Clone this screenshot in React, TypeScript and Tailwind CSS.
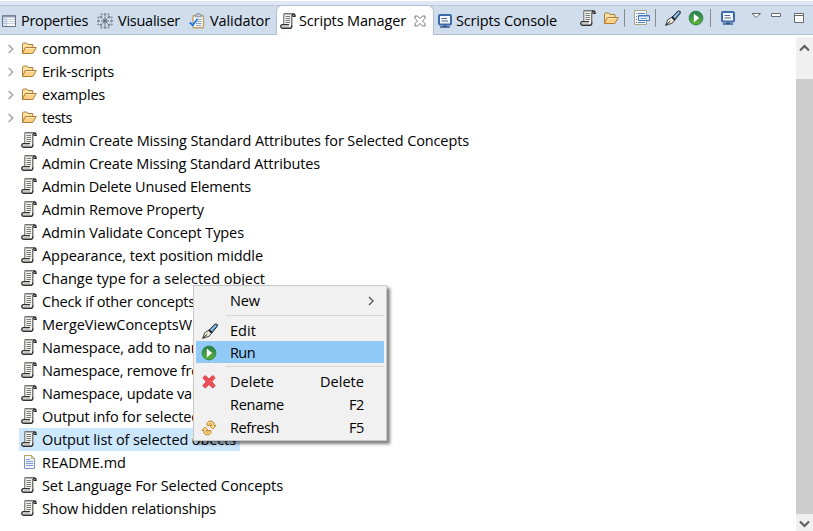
import { useLayoutEffect, useRef, useState } from "react";

/* Text whose letter spacing is tuned so that it fills the given width. */
function Label({ text, width, className = "" }: { text: string; width: number; className?: string }) {
  const ref = useRef<HTMLSpanElement>(null);
  const [spacing, setSpacing] = useState(0);
  useLayoutEffect(() => {
    if (ref.current) {
      const natural = ref.current.getBoundingClientRect().width - spacing * text.length;
      setSpacing((width - natural) / text.length);
    }
  }, [text, width]);
  return (
    <span ref={ref} className={`shrink-0 whitespace-pre ${className}`} style={{ letterSpacing: spacing }}>
      {text}
    </span>
  );
}

function ScriptIcon() {
  return (
    <svg width="16" height="16" viewBox="0 0 16 16" className="shrink-0">
      <path d="M3.5 11.5V2L5 .5H13.5L12.5 3V13L11 15.5H2L.8 13.5L1.5 11.5Z" fill="#f3f3f0" />
      <path d="M3.7 11V1.5" fill="none" stroke="#8b8b8b" strokeWidth="1.4" />
      <path d="M3.5 .8H13.5" stroke="#555" strokeWidth="1.2" />
      <path d="M12.5 3.6V2Q12.6 .8 13.7 .8Q15.2 .9 15.1 3.4H13" fill="#ddd" stroke="#222" strokeWidth="1.2" />
      <path d="M11.7 2V12.5" stroke="#777" strokeWidth="1.5" />
      <path d="M9 11.6H2Q.7 12 .7 13.4Q.9 15.2 2.4 15.2H10.5Q11.9 15 11.9 12.3" fill="none" stroke="#303030" strokeWidth="1.4" />
      <path d="M2 13.4H9" stroke="#c0c0c0" />
      <path d="M5.5 3.5H10M5.5 5.5H10M5.5 7.5H10M5.5 9.5H10" stroke="#777" strokeWidth="1" />
    </svg>
  );
}

function FolderIcon() {
  return (
    <svg width="16" height="16" viewBox="0 0 16 16" className="shrink-0">
      <path d="M1.5 13V4L2.5 3H5.8L7 4.5H11.8V7" fill="#fbe3a5" stroke="#b17a35" />
      <path d="M1.3 13.5L4.3 7.5H15.3L11.8 13.5Z" fill="#fbd285" stroke="#b17a35" strokeLinejoin="round" />
      <path d="M4.9 8.5H13.6" stroke="#ffeab8" />
    </svg>
  );
}

function FileIcon() {
  return (
    <svg width="16" height="16" viewBox="0 0 16 16" className="shrink-0">
      <path d="M3.5 1.5H10.5L13.5 4.5V14.5H3.5Z" fill="#eef5fd" stroke="#8390b0" />
      <path d="M3.5 5V1.5H10.5L13.5 4.5" fill="none" stroke="#b5a268" />
      <path d="M10.5 1.5V4.5H13.5Z" fill="#e2cf91" stroke="#b5a268" strokeWidth=".7" />
      <path d="M5 5.5H9M5 7.5H12M5 9.5H12M5 11.5H12" stroke="#7f9ccc" />
    </svg>
  );
}

function MonitorIcon() {
  return (
    <svg width="16" height="16" viewBox="0 0 16 16" className="shrink-0">
      <rect x="2" y="2" width="12" height="9.5" rx="1" fill="#f4f8fd" stroke="#3d6aa8" strokeWidth="2" />
      <path d="M4.5 5.5H10M4.5 8H11" stroke="#526789" />
      <path d="M6 12.5H10V13.2H13V14.7H3V13.2H6Z" fill="#315487" />
    </svg>
  );
}

function RunIcon() {
  return (
    <svg width="16" height="16" viewBox="0 0 16 16" className="shrink-0">
      <defs>
        <linearGradient id="run" x2="0" y2="1">
          <stop stopColor="#23804f" />
          <stop offset="1" stopColor="#5fb336" />
        </linearGradient>
      </defs>
      <circle cx="8" cy="8" r="6.9" fill="url(#run)" stroke="#2b8448" strokeWidth=".9" />
      <path d="M5.8 3.5L11.2 8L5.8 12.5Z" fill="#fff" />
    </svg>
  );
}

function PenIcon() {
  return (
    <svg width="16" height="16" viewBox="0 0 16 16" className="shrink-0">
      <path d="M7.3 7L13 .9L15.3 1.5V3.2L10.2 9.6Z" fill="#5685ad" stroke="#172536" strokeWidth=".9" />
      <path d="M9 7.5L14 2.2" stroke="#a5d3ee" strokeWidth="1.1" />
      <path d="M.7 15.3L2.7 9.7L6.8 7.4L9.5 9.9L7.3 13.2Z" fill="#f3efe2" stroke="#333" strokeWidth=".9" />
      <path d="M.7 15.3L5.3 11.2" stroke="#222" strokeWidth="1" />
      <path d="M6.7 7L10.1 10" stroke="#111" strokeWidth="1.4" />
    </svg>
  );
}

function TableIcon() {
  return (
    <svg width="16" height="16" viewBox="0 0 16 16" className="shrink-0">
      <path d="M1.5 2.5H14.5V13.5H1.5Z" fill="#fff" stroke="#65718c" />
      <path d="M2 3.5H14" stroke="#8c9ab4" strokeWidth="2" />
      <path d="M2 5H5V13H2Z" fill="#d8e4f2" />
      <path d="M5.5 5V13M2 6.5H14M2 8.5H14M2 10.5H14" stroke="#b7c3d4" strokeWidth=".8" />
    </svg>
  );
}

function NetworkIcon() {
  return (
    <svg width="16" height="16" viewBox="0 0 16 16" className="shrink-0" fill="#eef3f8" stroke="#4a535d">
      <path d="M8 3.5V12.5M4 8H12M5.5 5.5L10.5 10.5M10.5 5.5L5.5 10.5" strokeWidth=".8" />
      {[[8, 1.5], [8, 14.5], [1.5, 8], [14.5, 8], [4, 4], [12, 4], [4, 12], [12, 12]].map(([x, y]) => (
        <circle key={`${x}-${y}`} cx={x} cy={y} r=".9" strokeWidth=".8" />
      ))}
      {[[4.5, 1.3], [11.5, 1.3], [4.5, 14.7], [11.5, 14.7], [1.3, 4.5], [14.7, 4.5], [1.3, 11.5], [14.7, 11.5]].map(([x, y]) => (
        <circle key={`${x}-${y}`} cx={x} cy={y} r=".6" strokeWidth=".6" />
      ))}
      <circle cx="8" cy="8" r="1" />
    </svg>
  );
}

function ValidatorIcon() {
  return (
    <svg width="16" height="16" viewBox="0 0 16 16" className="shrink-0">
      <rect x="4" y="2.5" width="10.5" height="12.3" rx="1" fill="#f2f6fa" stroke="#c0a267" strokeWidth="1.4" />
      <path d="M6.5 3.8V2H8V.7H11V2H12.4V3.8Z" fill="#c7cfd9" stroke="#78889d" strokeWidth=".8" />
      <path d="M8.5 6.5H12.5M8.5 8.5H12.5M7 10.5H12.5M7 12.5H12.5" stroke="#8fa4bd" />
      <path d="M.8 9.5L3.7 12.2L8.5 6" fill="none" stroke="#1774ed" strokeWidth="1.8" />
    </svg>
  );
}

function LinkEditorIcon() {
  return (
    <svg width="16" height="16" viewBox="0 0 16 16" className="shrink-0">
      <path d="M.5 .5H12.5V14.5H.5Z" fill="#f4f8fc" stroke="#a6a88e" />
      <path d="M2 3.5H3M4 3.5H11M2 6.5H3M2 9.5H3M2 12.5H3M4 12.5H11" stroke="#5783bd" />
      <path d="M4.5 5.5H15.5V10.5H4.5Z" fill="#e9f3ff" stroke="#4275b8" />
      <path d="M5 6H15" stroke="#4275b8" />
      <path d="M6.5 8.5H13" stroke="#7299c7" />
    </svg>
  );
}

function DeleteIcon() {
  return (
    <svg width="16" height="16" viewBox="0 0 16 16" className="shrink-0">
      <path d="M4.3 1.5L8 5L11.7 1.5L14.2 3.8L10.8 7.7L14.2 11.7L11.7 14L8 10.5L4.3 14L1.8 11.7L5.2 7.7L1.8 3.8Z" fill="#ee5057" stroke="#cf3c43" strokeWidth=".9" strokeLinejoin="round" />
    </svg>
  );
}

function RefreshIcon() {
  return (
    <svg width="16" height="16" viewBox="0 0 16 16" className="shrink-0" fill="#ffdc83" stroke="#b97c24" strokeWidth=".9" strokeLinejoin="round">
      <path d="M6 5.6V3.2L8 1.2H11L13 3V5.5H15L11.8 9L8.6 5.5H10.5V4L9.2 3.6L8 4.6V5.6Z" />
      <path d="M10 10.4V12.8L8 14.8H5L3 13V10.5H1L4.2 7L7.4 10.5H5.5V12L6.8 12.4L8 11.4V10.4Z" />
    </svg>
  );
}

function Chevron() {
  return (
    <svg width="6" height="10" viewBox="0 0 6 10" className="shrink-0" fill="none" stroke="#a6a6a6" strokeWidth="1.6">
      <path d="M.7 1L4.7 5L.7 9" />
    </svg>
  );
}

const folders: [string, number][] = [
  ["common", 59],
  ["Erik-scripts", 72],
  ["examples", 63],
  ["tests", 30],
];

const files: [string, number][] = [
  ["Admin Create Missing Standard Attributes for Selected Concepts", 427],
  ["Admin Create Missing Standard Attributes", 278],
  ["Admin Delete Unused Elements", 209],
  ["Admin Remove Property", 162],
  ["Admin Validate Concept Types", 202],
  ["Appearance, text position middle", 221],
  ["Change type for a selected object", 223],
  ["Check if other concepts", 153],
  ["MergeViewConceptsW", 150],
  ["Namespace, add to name", 170],
  ["Namespace, remove from", 171],
  ["Namespace, update value", 170],
  ["Output info for selected", 158],
  ["Output list of selected obects", 194],
  ["README.md", 84],
  ["Set Language For Selected Concepts", 241],
  ["Show hidden relationships", 174],
];

const separator = "h-[18px] w-px shrink-0 bg-[#858a91]";

function TabBar() {
  return (
    <header className="flex h-[35px] shrink-0 flex-col bg-white pt-px">
      <div className="h-1 shrink-0 bg-[#dfe6f5]" />
      <div className="flex h-[30px] border-t border-[#c3c5cd] bg-[#cfddec]">
        <div className="flex w-[276px] items-center border-b border-[#b3bdd4] pl-px pt-px">
          <TableIcon />
          <Label text="Properties" width={67} className="ml-1" />
          <span className="ml-[9px] flex"><NetworkIcon /></span>
          <Label text="Visualiser" width={62} className="ml-[5px]" />
          <span className="ml-[9px] flex"><ValidatorIcon /></span>
          <Label text="Validator" width={60} className="ml-[5px]" />
        </div>
        <div className="-mt-px flex h-[30px] w-[158px] shrink-0 items-center rounded-t-[6px] border border-b-0 border-[#b3bdd4] bg-white pl-[3px] pt-px">
          <ScriptIcon />
          <Label text="Scripts Manager" width={107} className="ml-[3px]" />
          <svg width="12" height="12" viewBox="0 0 12 12" className="ml-[8px] shrink-0" fill="#fff" stroke="#777">
            <path d="M1 1H3.5L6 3.5L8.5 1H11V3.5L8.5 6L11 8.5V11H8.5L6 8.5L3.5 11H1V8.5L3.5 6L1 3.5Z" />
          </svg>
        </div>
        <div className="flex flex-1 items-center border-b border-[#b3bdd4] pl-[3px] pt-px">
          <MonitorIcon />
          <Label text="Scripts Console" width={101} className="ml-[3px]" />
          <div className="-mt-[5px] ml-[23px] flex flex-1 items-center">
            <ScriptIcon />
            <span className="ml-[7px] flex"><FolderIcon /></span>
            <span className={`ml-[5px] ${separator}`} />
            <span className="ml-[9px] flex"><LinkEditorIcon /></span>
            <span className={`ml-[5px] ${separator}`} />
            <span className="ml-[9px] flex"><PenIcon /></span>
            <span className="ml-[7px] flex"><RunIcon /></span>
            <span className={`ml-[6px] ${separator}`} />
            <span className="ml-[9px] flex"><MonitorIcon /></span>
            <svg width="56" height="14" viewBox="0 0 56 14" className="ml-[15px] shrink-0" fill="#fff" stroke="#6a6a6a">
              <path d="M1 2.5H9.5L5.2 6.5Z" />
              <path d="M20.5 2.5H29.5V5.5H20.5Z" />
              <path d="M43.5 2.5H52.5V11.5H43.5ZM43.5 4.5H52.5" />
            </svg>
          </div>
        </div>
      </div>
    </header>
  );
}

const row = "flex h-[23px] items-center";

function ContextMenu() {
  return (
    <div className="absolute left-[193px] top-[285px] flex h-[156px] w-[194px] flex-col border border-[#c8c8c8] bg-[#f1f1f1] px-[2px] pt-1 shadow-[3px_3px_3px_rgba(0,0,0,0.5)]">
      <div className="flex h-[22px] items-center pl-[34px] pr-[10px]">
        <Label text="New" width={30} />
        <svg width="6" height="10" viewBox="0 0 6 10" className="ml-auto" fill="none" stroke="#555" strokeWidth="1.3"><path d="M1 1L5 5L1 9" /></svg>
      </div>
      <div className="ml-[30px] mt-[3px] h-px bg-[#d7d7d7]" />
      <div className="mt-1 flex h-[21px] items-center pl-[6px]">
        <PenIcon />
        <Label text="Edit" width={26} className="ml-3" />
      </div>
      <div className="flex h-[22px] items-center bg-[#91c9f7] pl-[5px] pt-px">
        <RunIcon />
        <Label text="Run" width={25} className="ml-[13px]" />
      </div>
      <div className="ml-[30px] mt-[3px] h-px shrink-0 bg-[#d7d7d7]" />
      <div className={`${row} mt-[3px] pl-[5px] pr-5`}>
        <DeleteIcon />
        <Label text="Delete" width={44} className="ml-[13px]" />
        <span className="flex-1" />
        <Label text="Delete" width={44} />
      </div>
      <div className={`${row} pl-[34px] pr-5`}>
        <Label text="Rename" width={54} />
        <span className="flex-1" />
        <Label text="F2" width={15} />
      </div>
      <div className={`${row} pl-[5px] pr-5`}>
        <RefreshIcon />
        <Label text="Refresh" width={49} className="ml-[13px]" />
        <span className="flex-1" />
        <Label text="F5" width={15} />
      </div>
    </div>
  );
}

export default function App() {
  return (
    <div className="relative flex h-[531px] w-[813px] flex-col overflow-hidden bg-white font-['Open_Sans','Noto_Sans',sans-serif] text-[14.5px] leading-5 text-black">
      <TabBar />
      <main className="flex min-h-0 flex-1 pt-[2px]">
        <div className="flex-1">
          {folders.map(([name, width]) => (
            <div key={name} className={`${row} pl-[8px]`}>
              <Chevron />
              <span className="-mt-px ml-[7px] flex"><FolderIcon /></span>
              <Label text={name} width={width} className="ml-[5px]" />
            </div>
          ))}
          {files.map(([name, width], i) => (
            <div key={name} className={`${row} ml-[19px] w-fit pl-[2px] pr-1 ${i === 13 ? "bg-[#cce8ff]" : ""}`}>
              <span className="-mt-px flex">{name === "README.md" ? <FileIcon /> : <ScriptIcon />}</span>
              <Label text={name} width={width} className="ml-[5px]" />
            </div>
          ))}
        </div>
        <div className="flex w-[17px] flex-col bg-[#f0f0f0]">
          <div className="flex h-[42px] justify-center pt-[6px]">
            <svg width="11" height="9" viewBox="0 0 11 9" fill="none" stroke="#606060" strokeWidth="2.2"><path d="M1 7.5L5.5 3L10 7.5" /></svg>
          </div>
          <div className="flex-1 bg-[#cdcdcd]" />
          <div className="flex h-[17px] justify-center pt-[6px]">
            <svg width="11" height="9" viewBox="0 0 11 9" fill="none" stroke="#606060" strokeWidth="2.2"><path d="M1 1.5L5.5 6L10 1.5" /></svg>
          </div>
        </div>
      </main>
      <ContextMenu />
    </div>
  );
}
